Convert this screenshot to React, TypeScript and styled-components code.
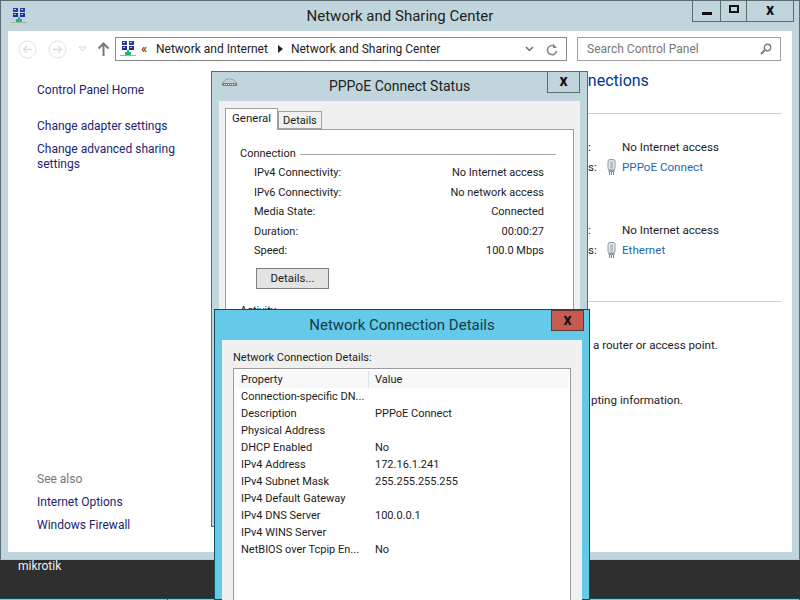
import React from "react";
import styled, { createGlobalStyle } from "styled-components";

const FONT = `Roboto, "Noto Sans", sans-serif`;

const statusRows = [
  ["IPv4 Connectivity:", "No Internet access"],
  ["IPv6 Connectivity:", "No network access"],
  ["Media State:", "Connected"],
  ["Duration:", "00:00:27"],
  ["Speed:", "100.0 Mbps"],
];

const detailRows = [
  ["Connection-specific DN...", ""],
  ["Description", "PPPoE Connect"],
  ["Physical Address", ""],
  ["DHCP Enabled", "No"],
  ["IPv4 Address", "172.16.1.241"],
  ["IPv4 Subnet Mask", "255.255.255.255"],
  ["IPv4 Default Gateway", ""],
  ["IPv4 DNS Server", "100.0.0.1"],
  ["IPv4 WINS Server", ""],
  ["NetBIOS over Tcpip En...", "No"],
];

const stripCells = [168, 56, 61, 58, 58, 58, 51, 6, 284];

function NetworkIcon() {
  return (
    <svg width="16" height="17" viewBox="0 0 16 17">
      <rect x="2" y="0" width="5" height="4" fill="#2b3aa8" />
      <rect x="9" y="0" width="5" height="4" fill="#2b3aa8" />
      <rect x="2" y="5" width="5" height="4" fill="#1f2d94" />
      <rect x="9" y="5" width="5" height="4" fill="#1f2d94" />
      <rect x="3" y="1" width="2" height="1" fill="#b9c6ea" />
      <rect x="10" y="1" width="2" height="1" fill="#b9c6ea" />
      <rect x="3" y="6" width="2" height="1" fill="#b9c6ea" />
      <rect x="10" y="6" width="2" height="1" fill="#b9c6ea" />
      <path d="M7 9h2v2h2v3H5v-3h2z" fill="#22b573" />
      <rect x="0" y="14" width="16" height="1" fill="#a9b3a9" />
    </svg>
  );
}

function ModemIcon() {
  return (
    <svg width="17" height="9" viewBox="0 0 17 9">
      <path d="M1 6.5C2 2.5 5 1 8.5 1S15 2.5 16 6.5z" fill="#c9ced2" stroke="#8d979d" strokeWidth="0.8" />
      <rect x="1" y="5" width="15" height="3" rx="1" fill="#70838f" />
      <path d="M3 6.5h11" stroke="#e4e9ec" strokeDasharray="1 1" />
    </svg>
  );
}

function CableIcon() {
  return (
    <svg width="9" height="16" viewBox="0 0 9 16">
      <rect x="1" y="0.5" width="7" height="10.5" rx="2" fill="#e4e8eb" stroke="#8f9aa3" />
      <rect x="3" y="2.5" width="3" height="7" fill="#b6c0c8" />
      <rect x="1.5" y="11" width="6" height="2" fill="#8f9aa3" />
      <path d="M2.5 13v3M4.5 13v3M6.5 13v3" stroke="#3f9bd4" />
    </svg>
  );
}

function ArrowCircle({ flip }: { flip?: boolean }) {
  return (
    <svg width="19" height="19" viewBox="0 0 19 19" style={flip ? { transform: "scaleX(-1)" } : undefined}>
      <circle cx="9.5" cy="9.5" r="8.5" fill="none" stroke="#e2e2e2" />
      <path d="M14 9.5H6M9 6l-3.5 3.5L9 13" fill="none" stroke="#dcdcdc" strokeWidth="1.4" />
    </svg>
  );
}

export default function App() {
  return (
    <Desktop>
      <GlobalStyle />
      <MainWindow>
        <MainTitle>
          <TitleIcon>
            <NetworkIcon />
          </TitleIcon>
          <MainTitleText>Network and Sharing Center</MainTitleText>
          <CaptionGroup>
            <MinButton>
              <MinGlyph />
            </MinButton>
            <MaxButton>
              <MaxGlyph />
            </MaxButton>
            <CloseButton>x</CloseButton>
          </CaptionGroup>
        </MainTitle>

        <Client>
          <Toolbar>
            <NavButtons>
              <ArrowCircle />
              <ArrowCircle flip />
              <svg width="9" height="6" viewBox="0 0 9 6">
                <path d="M1 1h7L4.5 5z" fill="none" stroke="#d8d8d8" />
              </svg>
              <svg width="13" height="14" viewBox="0 0 13 14">
                <path d="M6.5 14V2M1.5 6.5l5-5 5 5" fill="none" stroke="#77797b" strokeWidth="2" />
              </svg>
            </NavButtons>
            <AddressBar>
              <NetworkIcon />
              <Crumbs>
                <CrumbMark>«</CrumbMark>
                <span>Network and Internet</span>
                <CrumbArrow />
                <span>Network and Sharing Center</span>
              </Crumbs>
              <svg width="9" height="6" viewBox="0 0 9 6">
                <path d="M1 1l3.5 3.5L8 1" fill="none" stroke="#6e6e6e" strokeWidth="1.5" />
              </svg>
              <svg width="12" height="13" viewBox="0 0 12 13">
                <path d="M9.5 4A4.6 4.6 0 1 0 10.6 8" fill="none" stroke="#8a8a8a" strokeWidth="1.6" />
                <path d="M7 0.5v4.5h4z" fill="#8a8a8a" />
              </svg>
            </AddressBar>
            <SearchBox>
              <span>Search Control Panel</span>
              <svg width="12" height="12" viewBox="0 0 12 12">
                <circle cx="7.5" cy="4.5" r="3.2" fill="none" stroke="#7c7c7c" strokeWidth="1.4" />
                <path d="M5 7l-4 4" stroke="#7c7c7c" strokeWidth="2" />
              </svg>
            </SearchBox>
          </Toolbar>

          <Body>
            <Sidebar>
              <SideLink>Control Panel Home</SideLink>
              <SideGroup>
                <SideLink>Change adapter settings</SideLink>
                <SideLink $tight>
                  Change advanced sharing
                  <br />
                  settings
                </SideLink>
              </SideGroup>
              <SeeAlso>
                <SeeAlsoTitle>See also</SeeAlsoTitle>
                <SideLink>Internet Options</SideLink>
                <SideLink>Windows Firewall</SideLink>
              </SeeAlso>
            </Sidebar>

            {/* only the parts that stick out from under the dialogs */}
            <Main>
              <Heading>nnections</Heading>
              <Rule />
              <NetworkInfo>
                <span>:</span>
                <span>No Internet access</span>
                <span>s:</span>
                <ConnLink>
                  <CableIcon />
                  PPPoE Connect
                </ConnLink>
              </NetworkInfo>
              <NetworkInfo $second>
                <span>:</span>
                <span>No Internet access</span>
                <span>s:</span>
                <ConnLink>
                  <CableIcon />
                  Ethernet
                </ConnLink>
              </NetworkInfo>
              <Rule $lower />
              <ChangeText>a router or access point.</ChangeText>
              <TroubleText>pting information.</TroubleText>
            </Main>
          </Body>
        </Client>
      </MainWindow>

      <DesktopLabel>mikrotik</DesktopLabel>

      <BottomStrip>
        {stripCells.map((w, i) => (
          <StripCell key={i} style={{ width: w }} />
        ))}
      </BottomStrip>

      <StatusWindow>
        <DialogTitle>
          <DialogIcon>
            <ModemIcon />
          </DialogIcon>
          PPPoE Connect Status
          <StatusClose>x</StatusClose>
        </DialogTitle>
        <StatusClient>
          <Tabs>
            <Tab $active>General</Tab>
            <Tab>Details</Tab>
          </Tabs>
          <TabPanel>
            <GroupHead>
              <span>Connection</span>
              <GroupLine />
            </GroupHead>
            <StatusList>
              {statusRows.map(([k, v]) => (
                <StatusRow key={k}>
                  <span>{k}</span>
                  <span>{v}</span>
                </StatusRow>
              ))}
            </StatusList>
            <DetailsButton>Details...</DetailsButton>
            <GroupHead $activity>
              <span>Activity</span>
              <GroupLine />
            </GroupHead>
          </TabPanel>
        </StatusClient>
      </StatusWindow>

      <DetailsWindow>
        <DetailsTitle>
          Network Connection Details
          <DetailsClose>x</DetailsClose>
        </DetailsTitle>
        <DetailsClient>
          <DetailsCaption>Network Connection Details:</DetailsCaption>
          <ListView>
            <ListHeader>
              <HeaderCell>Property</HeaderCell>
              <HeaderCell $last>Value</HeaderCell>
            </ListHeader>
            {detailRows.map(([k, v]) => (
              <ListRow key={k}>
                <span>{k}</span>
                <span>{v}</span>
              </ListRow>
            ))}
          </ListView>
        </DetailsClient>
      </DetailsWindow>
    </Desktop>
  );
}

const GlobalStyle = createGlobalStyle`
  html, body {
    margin: 0;
    padding: 0;
    background: #2e2e2e;
  }
  * {
    box-sizing: border-box;
  }
`;

const Desktop = styled.div`
  position: relative;
  display: flex;
  flex-direction: column;
  width: 800px;
  height: 600px;
  overflow: hidden;
  background: #2e2e2e;
  font-family: ${FONT};
  font-size: 12px;
  line-height: 16px;
  color: #1c1c1c;
`;

const MainWindow = styled.div`
  display: flex;
  flex-direction: column;
  height: 560px;
  padding: 0 7px 7px;
  border: 1px solid #5d6b72;
  border-bottom-color: #b4c8cf;
  background: #c1d5dc;
`;

const MainTitle = styled.div`
  position: relative;
  display: flex;
  align-items: center;
  height: 30px;
  flex-shrink: 0;
`;

const TitleIcon = styled.div`
  display: flex;
  padding: 0 0 0 3px;
`;

const MainTitleText = styled.div`
  flex: 1;
  padding-right: 19px;
  font-size: 15px;
  text-align: center;
  color: #222;
`;

const CaptionGroup = styled.div`
  position: absolute;
  top: -1px;
  right: -2px;
  display: flex;
  height: 22px;
  border: 1px solid #5d6b72;
  border-top: none;
`;

const CaptionCell = styled.div`
  display: flex;
  align-items: center;
  justify-content: center;
  border-right: 1px solid #5d6b72;
`;

const MinButton = styled(CaptionCell)`
  width: 28px;
`;

const MaxButton = styled(CaptionCell)`
  width: 26px;
`;

const CloseButton = styled.div`
  width: 46px;
  text-align: center;
  font-size: 16px;
  line-height: 19px;
  font-weight: 700;
  color: #111;
`;

const MinGlyph = styled.div`
  width: 10px;
  height: 3px;
  margin-top: 5px;
  background: #111;
`;

const MaxGlyph = styled.div`
  width: 10px;
  height: 8px;
  margin-bottom: 3px;
  border: 2px solid #111;
`;

const Client = styled.div`
  display: flex;
  flex-direction: column;
  flex: 1;
  min-height: 0;
  background: #fff;
`;

const Toolbar = styled.div`
  display: flex;
  align-items: center;
  height: 39px;
  padding: 0 10px 3px 10px;
  flex-shrink: 0;
`;

const NavButtons = styled.div`
  display: flex;
  align-items: center;
  gap: 11px;
  width: 97px;
  & > svg:nth-child(4) {
    margin-left: -1px;
  }
`;

const AddressBar = styled.div`
  display: flex;
  align-items: center;
  width: 452px;
  height: 24px;
  padding: 0 8px 0 4px;
  border: 1px solid #8b8b8b;
  & > svg:nth-of-type(2) {
    margin-left: auto;
  }
  & > svg:nth-of-type(3) {
    margin-left: 12px;
  }
`;

const Crumbs = styled.div`
  display: flex;
  align-items: center;
  margin-left: 5px;
  white-space: nowrap;
`;

const CrumbMark = styled.span`
  width: 15px;
  font-size: 13px;
`;

const CrumbArrow = styled.span`
  width: 0;
  height: 0;
  margin: 0 8px 0 10px;
  border-left: 5px solid #222;
  border-top: 4px solid transparent;
  border-bottom: 4px solid transparent;
`;

const SearchBox = styled.div`
  display: flex;
  align-items: center;
  justify-content: space-between;
  width: 204px;
  height: 24px;
  margin-left: 10px;
  padding: 0 8px 0 9px;
  border: 1px solid #a0a0a0;
  color: #777;
`;

const Body = styled.div`
  display: flex;
  flex: 1;
  min-height: 0;
`;

const Sidebar = styled.div`
  display: flex;
  flex-direction: column;
  width: 212px;
  padding: 12px 0 19px 29px;
  color: #1b2470;
`;

const SideLink = styled.div<{ $tight?: boolean }>`
  line-height: ${({ $tight }) => ($tight ? "15px" : "16px")};
  white-space: nowrap;
`;

const SideGroup = styled.div`
  display: flex;
  flex-direction: column;
  gap: 8px;
  margin-top: 20px;
`;

const SeeAlso = styled.div`
  display: flex;
  flex-direction: column;
  gap: 7px;
  margin-top: auto;
`;

const SeeAlsoTitle = styled.div`
  color: #777;
`;

const Main = styled.div`
  flex: 1;
  min-width: 0;
  padding-right: 11px;
  font-size: 11.6px;
  white-space: nowrap;
`;

const Heading = styled.div`
  height: 21px;
  padding-left: 359px;
  font-size: 16px;
  line-height: 22px;
  color: #003399;
`;

const Rule = styled.div<{ $lower?: boolean }>`
  height: 1px;
  margin-top: ${({ $lower }) => ($lower ? "41px" : "22px")};
  background: #cfcfcf;
`;

const NetworkInfo = styled.div<{ $second?: boolean }>`
  display: grid;
  grid-template-columns: 34px 1fr;
  grid-auto-rows: 20px;
  align-items: center;
  margin-top: ${({ $second }) => ($second ? "43px" : "23px")};
  padding-left: 368px;
`;

const ConnLink = styled.span`
  display: flex;
  align-items: center;
  gap: 6px;
  margin-left: -15px;
  color: #2467b3;
`;

const ChangeText = styled.div`
  margin-top: 35px;
  padding-left: 373px;
`;

const TroubleText = styled.div`
  margin-top: 39px;
  padding-left: 371px;
`;

const DesktopLabel = styled.div`
  padding: 0 0 0 18px;
  color: #f2f2f2;
  line-height: 13px;
`;

const BottomStrip = styled.div`
  display: flex;
  height: 2px;
  margin-top: auto;
  background: #0f4d5c;
`;

const StripCell = styled.div`
  margin-top: 1px;
  border-right: 1px solid #244e5c;
  background: #85c4d2;
`;

const StatusWindow = styled.div`
  position: absolute;
  left: 211px;
  top: 71px;
  width: 377px;
  height: 456px;
  padding: 0 7px 7px;
  border: 1px solid #5d6b72;
  background: #c1d5dc;
`;

const DialogTitle = styled.div`
  position: relative;
  height: 29px;
  margin: 0 -7px;
  font-size: 14px;
  line-height: 29px;
  text-align: center;
  color: #222;
`;

const DialogIcon = styled.div`
  position: absolute;
  left: 9px;
  top: 6px;
  line-height: 0;
`;

const StatusClose = styled.div`
  position: absolute;
  top: -1px;
  right: 7px;
  width: 33px;
  height: 22px;
  border: 1px solid #5d6b72;
  font-size: 16px;
  line-height: 17px;
  font-weight: 700;
  color: #111;
`;

const StatusClient = styled.div`
  height: 425px;
  padding: 7px 6px 0;
  background: #f0f0f0;
`;

const Tabs = styled.div`
  display: flex;
  align-items: flex-end;
  height: 21px;
`;

const Tab = styled.div<{ $active?: boolean }>`
  position: relative;
  z-index: ${({ $active }) => ($active ? 1 : 0)};
  height: ${({ $active }) => ($active ? "22px" : "18px")};
  margin-bottom: ${({ $active }) => ($active ? "-1px" : "0")};
  padding: ${({ $active }) => ($active ? "1px 6px 0" : "1px 4px 0")};
  border: 1px solid #a0a0a0;
  border-bottom: ${({ $active }) => ($active ? "none" : "1px solid #a0a0a0")};
  background: ${({ $active }) => ($active ? "#fff" : "#f0f0f0")};
  font-size: ${({ $active }) => ($active ? "11.5px" : "11px")};
`;

const TabPanel = styled.div`
  height: 370px;
  padding: 16px 17px 0 14px;
  border: 1px solid #a0a0a0;
  background: #fff;
`;

const GroupHead = styled.div<{ $activity?: boolean }>`
  display: flex;
  align-items: center;
  gap: 4px;
  margin-top: ${({ $activity }) => ($activity ? "14px" : "0")};
  font-size: 11px;
`;

const GroupLine = styled.div`
  flex: 1;
  height: 1px;
  background: #a9a9a9;
`;

const StatusList = styled.div`
  margin: 1px 12px 0 14px;
`;

const StatusRow = styled.div`
  display: flex;
  justify-content: space-between;
  height: 19.5px;
  font-size: 11px;
  line-height: 19px;
`;

const DetailsButton = styled.div`
  width: 73px;
  height: 21px;
  margin: 7px 0 0 16px;
  border: 1px solid #7f7f7f;
  background: #e3e3e3;
  font-size: 11.4px;
  text-align: center;
  line-height: 19px;
`;

const DetailsWindow = styled.div`
  position: absolute;
  left: 214px;
  top: 309px;
  width: 376px;
  height: 291px;
  padding: 0 7px;
  border: 1px solid #0f4d5c;
  background: #65c9ea;
`;

const DetailsTitle = styled.div`
  position: relative;
  height: 30px;
  margin: 0 -7px;
  font-size: 15px;
  line-height: 31px;
  text-align: center;
  color: #123c46;
`;

const DetailsClose = styled.div`
  position: absolute;
  top: 0;
  right: 5px;
  width: 33px;
  height: 21px;
  border: 1px solid #5c3a38;
  background: #c75a50;
  font-size: 16px;
  line-height: 17px;
  font-weight: 700;
  color: #111;
`;

const DetailsClient = styled.div`
  height: 262px;
  padding: 10px 11px 0 11px;
  background: #f0f0f0;
`;

const DetailsCaption = styled.div`
  font-size: 11px;
  line-height: 15px;
`;

const ListView = styled.div`
  height: 240px;
  margin-top: 3px;
  padding: 2px 1px 0;
  border: 1px solid #9a9a9a;
  background: #fff;
`;

const ListHeader = styled.div`
  display: grid;
  grid-template-columns: 134px 1fr;
  height: 17px;
  background: #f6f8fa;
`;

const HeaderCell = styled.div<{ $last?: boolean }>`
  padding-left: 6px;
  border-right: ${({ $last }) => ($last ? "none" : "1px solid #dfe3e6")};
  font-size: 11px;
  line-height: 17px;
`;

const ListRow = styled.div`
  display: grid;
  grid-template-columns: 134px 1fr;
  height: 17px;
  font-size: 11px;
  line-height: 17px;
  & > span {
    padding-left: 6px;
    white-space: nowrap;
  }
`;
